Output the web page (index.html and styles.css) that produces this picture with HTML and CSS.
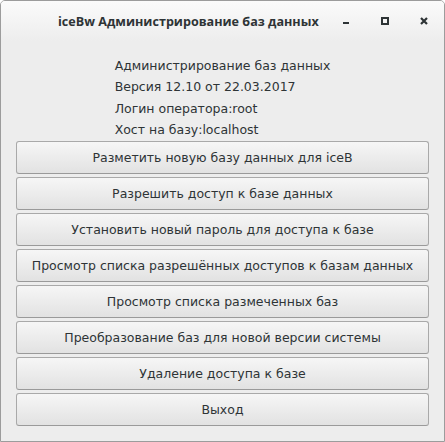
FILE: index.html
```html
<html>
<head>
<title>iceBw Администрирование баз данных</title>
<meta http-equiv="Content-Type" content="text/html; charset=utf-8" />
<link rel="stylesheet" href="styles.css">
</head>
<body>
<div class="window">
    <!-- заголовок окна -->
    <div class="titlebar">
        <div class="title">iceBw Администрирование баз данных</div>
        <div class="controls">
            <span class="ctl">
                <svg width="8" height="8" viewBox="0 0 8 8"><rect x="1" y="5" width="6" height="2" fill="#2e3436"/></svg>
            </span>
            <span class="ctl">
                <svg width="8" height="8" viewBox="0 0 8 8"><rect x="1" y="1" width="6" height="6" fill="none" stroke="#2e3436" stroke-width="2"/></svg>
            </span>
            <span class="ctl">
                <svg width="8" height="8" viewBox="0 0 8 8"><path d="M1 1 L7 7 M7 1 L1 7" stroke="#2e3436" stroke-width="2.2"/></svg>
            </span>
        </div>
    </div>

    <div class="content">
        <div class="info">
            <div class="line">Администрирование баз данных</div>
            <div class="line">Версия 12.10 от 22.03.2017</div>
            <div class="line">Логин оператора:root</div>
            <div class="line">Хост на базу:localhost</div>
        </div>

        <div class="buttons">
            <button class="btn">Разметить новую базу данных для iceB</button>
            <button class="btn">Разрешить доступ к базе данных</button>
            <button class="btn">Установить новый пароль для доступа к базе</button>
            <button class="btn">Просмотр списка разрешённых доступов к базам данных</button>
            <button class="btn">Просмотр списка размеченных баз</button>
            <button class="btn">Преобразование баз для новой версии системы</button>
            <button class="btn">Удаление доступа к базе</button>
            <button class="btn">Выход</button>
        </div>
    </div>
</div>
</body>
</html>
```

FILE: styles.css
```css
html, body {
    margin: 0;
    padding: 0;
    background-color: #ffffff;
}
body {
    font-family: "DejaVu Sans", sans-serif;
    color: #2e3436;
}
.window {
    width: 445px;
    height: 442px;
    box-sizing: border-box;
    border: 1px solid #9c9c9c;
    border-radius: 5px 5px 0 0;
    background-color: #ededed;
    overflow: hidden;
}
.titlebar {
    height: 40px;
    display: flex;
    align-items: center;
    background: linear-gradient(#fbfbfb, #ededed);
}
.title {
    font-family: "Open Sans", sans-serif;
    font-weight: bold;
    font-size: 12.6px;
    white-space: nowrap;
    margin-left: 57px;
    flex: 1;
}
.controls {
    display: flex;
    margin-right: 1px;
}
.ctl {
    width: 39px;
    height: 20px;
    display: flex;
    align-items: center;
    justify-content: center;
}
.content {
    padding: 14px 15px 0 15px;
}
.info {
    width: fit-content;
    margin: 0 auto;
    font-size: 12.5px;
    white-space: nowrap;
}
.line {
    height: 21.4px;
    line-height: 21.4px;
}
.buttons {
    display: flex;
    flex-direction: column;
    gap: 3px;
}
.btn {
    height: 33px;
    font-family: "DejaVu Sans", sans-serif;
    font-size: 12.5px;
    white-space: nowrap;
    color: #2e3436;
    border: 1px solid #a9a9a9;
    border-bottom-color: #9a9a9a;
    border-radius: 3px;
    background: linear-gradient(#f6f6f6, #e2e2e2);
    padding: 0;
    cursor: pointer;
}
.btn:hover {
    background: linear-gradient(#fafafa, #e8e8e8);
}
```
